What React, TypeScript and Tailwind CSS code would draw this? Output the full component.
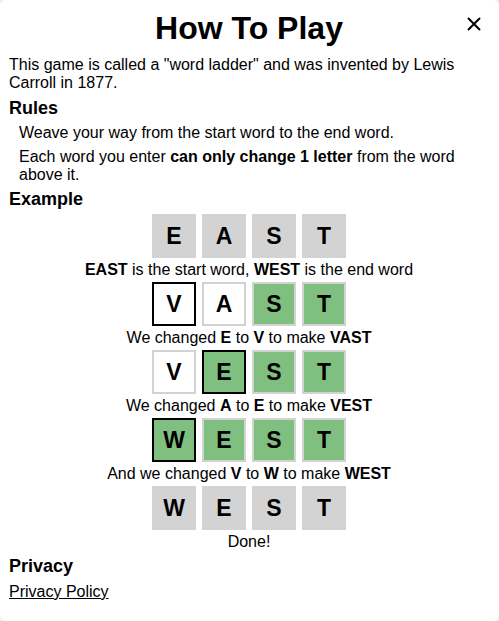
import React from "react"

type Tile = { l: string; kind: "gray" | "green" | "white" | "cur" | "curGreen" }

const rows: { tiles: Tile[]; caption: React.ReactNode }[] = [
  {
    tiles: [
      { l: "E", kind: "gray" },
      { l: "A", kind: "gray" },
      { l: "S", kind: "gray" },
      { l: "T", kind: "gray" },
    ],
    caption: (
      <>
        <b>EAST</b> is the start word, <b>WEST</b> is the end word
      </>
    ),
  },
  {
    tiles: [
      { l: "V", kind: "cur" },
      { l: "A", kind: "white" },
      { l: "S", kind: "green" },
      { l: "T", kind: "green" },
    ],
    caption: (
      <>
        We changed <b>E</b> to <b>V</b> to make <b>VAST</b>
      </>
    ),
  },
  {
    tiles: [
      { l: "V", kind: "white" },
      { l: "E", kind: "curGreen" },
      { l: "S", kind: "green" },
      { l: "T", kind: "green" },
    ],
    caption: (
      <>
        We changed <b>A</b> to <b>E</b> to make <b>VEST</b>
      </>
    ),
  },
  {
    tiles: [
      { l: "W", kind: "curGreen" },
      { l: "E", kind: "green" },
      { l: "S", kind: "green" },
      { l: "T", kind: "green" },
    ],
    caption: (
      <>
        And we changed <b>V</b> to <b>W</b> to make <b>WEST</b>
      </>
    ),
  },
  {
    tiles: [
      { l: "W", kind: "gray" },
      { l: "E", kind: "gray" },
      { l: "S", kind: "gray" },
      { l: "T", kind: "gray" },
    ],
    caption: <>Done!</>,
  },
]

const tileClass = {
  gray: "bg-[#d3d3d3] border-[#d3d3d3]",
  green: "bg-[#7fbf7f] border-[#d3d3d3]",
  white: "bg-white border-[#d3d3d3]",
  cur: "bg-white border-black",
  curGreen: "bg-[#7fbf7f] border-black",
}

const Row = ({ tiles }: { tiles: Tile[] }) => (
  <div className="flex justify-center gap-[6px] my-[2px]">
    {tiles.map((t, i) => (
      <div
        key={i}
        className={`w-[44px] h-[44px] border-2 flex items-center justify-center text-[23px] font-bold ${tileClass[t.kind]}`}
      >
        {t.l}
      </div>
    ))}
  </div>
)

export default function App() {
  return (
    <div className="w-[499px] h-[621px] bg-[#eeeeee] font-['Liberation_Sans',Arial,sans-serif] text-black">
      <div className="relative w-full h-full bg-white rounded-[6px] pl-[9px] pr-[10px] pt-[10px] text-[16px] leading-[18px]">
        <h1 className="text-center text-[32px] leading-[36px] font-bold">How To Play</h1>
        <button className="absolute right-[18px] top-[17px] w-[14px] h-[14px]">
          <svg viewBox="0 0 14 14" width="14" height="14">
            <path d="M1 1L13 13M13 1L1 13" stroke="black" strokeWidth="2" />
          </svg>
        </button>
        <p className="mt-[10px]">
          This game is called a "word ladder" and was invented by Lewis Carroll in 1877.
        </p>
        <h2 className="mt-[6px] text-[18px] leading-[20px] font-bold">Rules</h2>
        <div className="pl-[10px]">
          <p className="mt-[6px]">Weave your way from the start word to the end word.</p>
          <p className="mt-[6px]">
            Each word you enter <b>can only change 1 letter</b> from the word above it.
          </p>
        </div>
        <h2 className="mt-[5px] text-[18px] leading-[20px] font-bold">Example</h2>
        <div className="mt-[5px]">
          {rows.map((r, i) => (
            <div key={i}>
              <Row tiles={r.tiles} />
              <div className="text-center leading-[20px]">{r.caption}</div>
            </div>
          ))}
        </div>
        <h2 className="mt-[4px] text-[18px] leading-[20px] font-bold">Privacy</h2>
        <a href="#" className="block mt-[7px] underline w-fit">
          Privacy Policy
        </a>
      </div>
    </div>
  )
}
